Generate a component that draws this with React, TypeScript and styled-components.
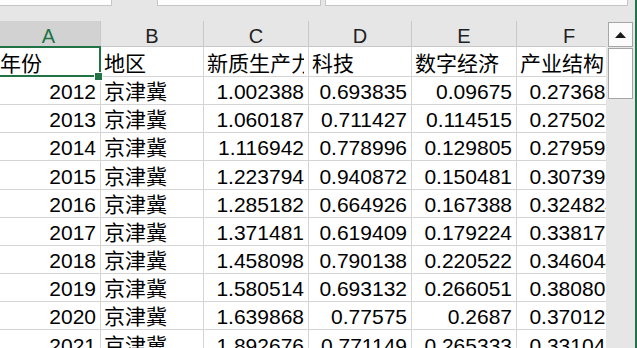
import React from 'react';
import styled, { createGlobalStyle } from 'styled-components';

const GlobalStyle = createGlobalStyle`
  html, body {
    margin: 0;
    padding: 0;
    background: #ffffff;
  }
  body {
    font-family: "Liberation Sans", "Noto Sans CJK SC", sans-serif;
  }
`;

const EXCEL_GREEN = '#217346';
const GRID = '#d4d4d4';

const Window = styled.div`
  width: 637px;
  height: 348px;
  overflow: hidden;
  display: flex;
  background: #e6e6e6;
`;

const Main = styled.div`
  flex: 1;
  display: flex;
  flex-direction: column;
  min-width: 0;
`;

const GreenEdge = styled.div`
  width: 2px;
  background: ${EXCEL_GREEN};
`;

const TopStrip = styled.div`
  height: 21px;
  flex-shrink: 0;
  display: flex;
  align-items: flex-start;
  gap: 45px;
`;

const FieldGroup = styled.div`
  display: flex;
  gap: 4px;
`;

const Field = styled.div<{ $w: number; $open?: boolean }>`
  box-sizing: border-box;
  width: ${(p) => p.$w}px;
  height: 6px;
  background: #fdfdfd;
  border: 1px solid #c6c6c6;
  border-top: none;
  ${(p) => (p.$open ? 'border-left: none;' : '')}
`;

const Body = styled.div`
  flex: 1;
  display: flex;
  min-height: 0;
`;

const Viewport = styled.div`
  width: 606px;
  overflow: hidden;
  background: #ffffff;
`;

const Sheet = styled.div`
  margin-left: -3px;
  display: grid;
  grid-template-columns: 104px 103px 105px 103px 105px 105px;
  grid-template-rows: 26px 30px;
  grid-auto-rows: 28.17px;
  width: max-content;
`;

const ColHead = styled.div<{ $active?: boolean }>`
  box-sizing: border-box;
  display: flex;
  justify-content: center;
  align-items: flex-end;
  background: ${(p) => (p.$active ? '#d2d2d2' : '#e6e6e6')};
  color: ${(p) => (p.$active ? EXCEL_GREEN : '#1f1f1f')};
  border-right: 1px solid #c8c8c8;
  border-bottom: 1px solid #c8c8c8;
  font-size: 20px;
  line-height: 20px;
`;

const Cell = styled.div<{ $num?: boolean; $selected?: boolean }>`
  box-sizing: border-box;
  position: relative;
  display: flex;
  justify-content: ${(p) => (p.$num ? 'flex-end' : 'flex-start')};
  align-items: flex-end;
  padding: 0 4px 0 3px;
  border-right: 1px solid ${GRID};
  border-bottom: 1px solid ${GRID};
  font-size: 21px;
  line-height: 24px;
  color: #000000;
  white-space: nowrap;
  overflow: ${(p) => (p.$selected ? 'visible' : 'hidden')};

  ${(p) =>
    p.$selected
      ? `
    &::after {
      content: '';
      position: absolute;
      top: -1px;
      left: 0;
      right: -1px;
      bottom: -1px;
      border: 2px solid ${EXCEL_GREEN};
      z-index: 2;
      pointer-events: none;
    }
  `
      : ''}
`;

const CellText = styled.span`
  overflow: hidden;
`;

const FillHandle = styled.span`
  position: absolute;
  right: -2px;
  bottom: -4px;
  width: 7px;
  height: 7px;
  background: ${EXCEL_GREEN};
  box-shadow: 0 0 0 1px #ffffff;
  z-index: 3;
`;

const ScrollBar = styled.div`
  flex: 1;
  display: flex;
  flex-direction: column;
  gap: 1px;
  padding: 1px 2px 0 2px;
  background: #e6e6e6;
`;

const ScrollButton = styled.div`
  box-sizing: border-box;
  height: 25px;
  background: #fbfbfb;
  border: 1px solid #a6a6a6;
  display: flex;
  align-items: center;
  justify-content: center;
`;

const Thumb = styled.div`
  box-sizing: border-box;
  height: 51px;
  background: #ffffff;
  border: 1px solid #a6a6a6;
`;

const columns = ['A', 'B', 'C', 'D', 'E', 'F'];
const headers = ['年份', '地区', '新质生产力', '科技', '数字经济', '产业结构'];

const rows: [number, string, string, string, string, string][] = [
  [2012, '京津冀', '1.002388', '0.693835', '0.09675', '0.273681'],
  [2013, '京津冀', '1.060187', '0.711427', '0.114515', '0.275021'],
  [2014, '京津冀', '1.116942', '0.778996', '0.129805', '0.279591'],
  [2015, '京津冀', '1.223794', '0.940872', '0.150481', '0.307391'],
  [2016, '京津冀', '1.285182', '0.664926', '0.167388', '0.324824'],
  [2017, '京津冀', '1.371481', '0.619409', '0.179224', '0.338171'],
  [2018, '京津冀', '1.458098', '0.790138', '0.220522', '0.346044'],
  [2019, '京津冀', '1.580514', '0.693132', '0.266051', '0.380801'],
  [2020, '京津冀', '1.639868', '0.77575', '0.2687', '0.370121'],
  [2021, '京津冀', '1.892676', '0.771149', '0.265333', '0.331041'],
];

const App: React.FC = () => {
  return (
    <>
      <GlobalStyle />
      <Window>
        <Main>
          <TopStrip>
            <Field $w={112} $open />
            <FieldGroup>
              <Field $w={164} />
              <Field $w={303} />
            </FieldGroup>
          </TopStrip>
          <Body>
            <Viewport>
              <Sheet>
                {columns.map((c, i) => (
                  <ColHead key={c} $active={i === 0}>
                    {c}
                  </ColHead>
                ))}
                {headers.map((h, i) => (
                  <Cell key={h} $selected={i === 0}>
                    <CellText>{h}</CellText>
                    {i === 0 && <FillHandle />}
                  </Cell>
                ))}
                {rows.map((r) => (
                  <React.Fragment key={r[0]}>
                    <Cell $num>{r[0]}</Cell>
                    <Cell>{r[1]}</Cell>
                    <Cell $num>{r[2]}</Cell>
                    <Cell $num>{r[3]}</Cell>
                    <Cell $num>{r[4]}</Cell>
                    <Cell $num>{r[5]}</Cell>
                  </React.Fragment>
                ))}
              </Sheet>
            </Viewport>
            <ScrollBar>
              <ScrollButton>
                <svg width="11" height="6" viewBox="0 0 11 6">
                  <polygon points="5.5,0 11,6 0,6" fill="#1a1a1a" />
                </svg>
              </ScrollButton>
              <Thumb />
            </ScrollBar>
          </Body>
        </Main>
        <GreenEdge />
      </Window>
    </>
  );
};

export default App;
